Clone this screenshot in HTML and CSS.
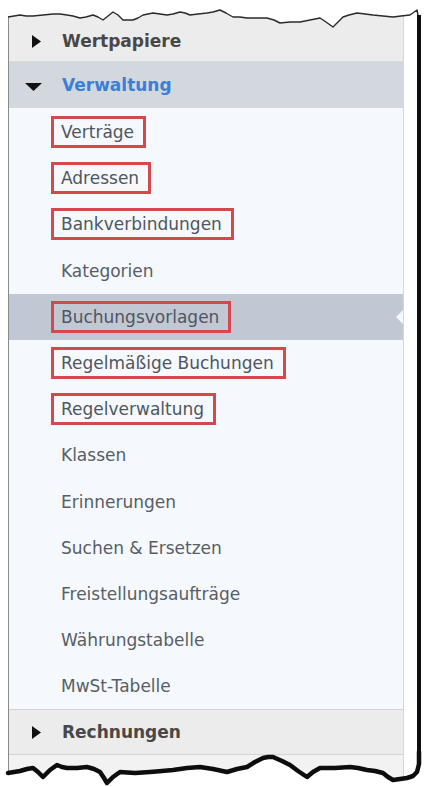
FILE: index.html
```html
<!DOCTYPE html>
<html lang="de">

<head>
    <meta charset="UTF-8">
    <meta name="viewport" content="width=device-width, initial-scale=1.0">
    <title>Navigation Verwaltung</title>
    <link rel="stylesheet" href="styles.css">
</head>

<body>
    <div class="sheet">
        <div class="panel">
            <div class="head first">
                <svg class="arrow" width="20" height="20" viewBox="0 0 20 20"><polygon points="8,4 17,10.5 8,17" fill="#111"/></svg>
                <span>Wertpapiere</span>
            </div>

            <div class="head open">
                <svg class="arrow" width="20" height="20" viewBox="0 0 20 20"><polygon points="1,8 18,8 9.5,16" fill="#111"/></svg>
                <span>Verwaltung</span>
            </div>

            <ul class="items">
                <li><span class="label marked">Verträge</span></li>
                <li><span class="label marked">Adressen</span></li>
                <li><span class="label marked">Bankverbindungen</span></li>
                <li><span class="label">Kategorien</span></li>
                <li class="active"><span class="label marked">Buchungsvorlagen</span></li>
                <li><span class="label marked">Regelmäßige Buchungen</span></li>
                <li><span class="label marked">Regelverwaltung</span></li>
                <li><span class="label">Klassen</span></li>
                <li><span class="label">Erinnerungen</span></li>
                <li><span class="label">Suchen &amp; Ersetzen</span></li>
                <li><span class="label">Freistellungsaufträge</span></li>
                <li><span class="label">Währungstabelle</span></li>
                <li><span class="label">MwSt-Tabelle</span></li>
            </ul>

            <div class="head last">
                <svg class="arrow" width="20" height="20" viewBox="0 0 20 20"><polygon points="8,4 17,10.5 8,17" fill="#111"/></svg>
                <span>Rechnungen</span>
            </div>
        </div>
        <div class="gap"></div>
        <div class="shadow"></div>

        <!-- abgerissene Kante oben -->
        <svg class="torn top" width="426" height="32" viewBox="0 0 426 32">
            <polygon fill="#ffffff" points="0,0 426,0 426,32 422,32 422,15 418,15 417,10 410,15 401,16 393,17 383,16 373,15 365,14 357,13 349,15 343,17 338,22 333,27 326,22 320,18 310,20 300,22 290,22 280,23 274,20 267,18 257,18 247,18 240,17 233,17 226,13 220,10 213,12 207,13 198,14 190,15 185,13 180,12 173,14 167,15 160,14 153,13 148,14 143,15 138,18 133,20 123,20 118,15 113,12 108,16 103,20 98,17 93,15 86,17 80,18 73,16 67,15 60,14 53,14 43,15 33,16 26,16 20,15 14,16 8,17 0,17"/>
            <polyline fill="none" stroke="#2a2a2a" stroke-width="1.4" stroke-linejoin="round" points="8,17 14,16 20,15 26,16 33,16 43,15 53,14 60,14 67,15 73,16 80,18 86,17 93,15 98,17 103,20 108,16 113,12 118,15 123,20 133,20 138,18 143,15 148,14 153,13 160,14 167,15 173,14 180,12 185,13 190,15 198,14 207,13 213,12 220,10 226,13 233,17 240,17 247,18 257,18 267,18 274,20 280,23 290,22 300,22 310,20 320,18 326,22 333,27 338,22 343,17 349,15 357,13 365,14 373,15 383,16 393,17 401,16 410,15 417,10 418,15"/>
        </svg>

        <!-- abgerissene Kante unten -->
        <svg class="torn bottom" width="426" height="37" viewBox="0 0 426 37">
            <polygon fill="#ffffff" points="0,23 8,23 14,22 20,21 27,19 33,18 38,22 43,27 50,20 57,15 62,17 67,18 77,18 87,17 94,19 100,22 104,28 107,33 113,27 120,22 135,23 150,22 162,21 173,20 187,18 200,17 213,19 227,22 237,19 247,17 255,12 263,8 268,7 273,7 282,11 290,15 298,21 307,27 313,22 320,18 335,18 350,17 358,18 367,20 375,21 383,23 388,27 393,30 400,29 407,28 413,26 417,22 419,17 421,12 426,12 426,37 0,37"/>
            <polyline fill="none" stroke="#0d0d0d" stroke-width="4.5" stroke-linejoin="round" stroke-linecap="round" points="8,23 14,22 20,21 27,19 33,18 38,22 43,27 50,20 57,15 62,17 67,18 77,18 87,17 94,19 100,22 104,28 107,33 113,27 120,22 135,23 150,22 162,21 173,20 187,18 200,17 213,19 227,22 237,19 247,17 255,12 263,8 268,7 273,7 282,11 290,15 298,21 307,27 313,22 320,18 335,18 350,17 358,18 367,20 375,21 383,23 388,27 393,30 400,29 407,28 413,26 417,22 419,14 419,2"/>
        </svg>
    </div>
</body>

</html>
```

FILE: styles.css
```css
/* Seitenleiste mit Menügruppen */
body {
    margin: 0;
    background-color: #ffffff;
    font-family: "DejaVu Sans", Verdana, sans-serif;
}

.sheet {
    position: relative;
    display: flex;
    width: 426px;
    height: 787px;
    padding: 10px 0 0 8px;
    box-sizing: border-box;
    overflow: hidden;
}

.panel {
    width: 396px;
    border-left: 1.5px solid #8a8a8a;
    border-right: 1px solid #d6d6d6;
    background-color: #f2f2f2;
    box-sizing: border-box;
}

.gap {
    width: 13px;
}

.shadow {
    width: 4px;
    background-color: #0d0d0d;
}

/* Gruppenköpfe */
.head {
    display: flex;
    align-items: center;
    height: 46px;
    padding-left: 15px;
    box-sizing: border-box;
    font-size: 17px;
    font-weight: bold;
    color: #484848;
    background-color: #ececec;
}

.head .arrow {
    flex: none;
    margin-right: 18px;
}

.head.first {
    height: 52px;
    padding-top: 10px;
    border-bottom: 1px solid #d9d9d9;
}

.head.open {
    background-color: #d3d8de;
    color: #3b7fd6;
}

.head.last {
    height: 46px;
    border-top: 1px solid #d4d4d4;
    border-bottom: 1px solid #d4d4d4;
}

/* Einträge */
.items {
    list-style: none;
    margin: 0;
    padding: 1px 0 0 0;
    background-color: #f5f8fc;
}

.items li {
    position: relative;
    display: flex;
    align-items: center;
    height: 46.2px;
    padding-left: 42px;
}

.items li.active {
    background-color: #c1c8d4;
}

.items li.active::after {
    content: '';
    position: absolute;
    right: 0;
    top: 16px;
    border-top: 7px solid transparent;
    border-bottom: 7px solid transparent;
    border-right: 7px solid #f5f8fc;
}

.label {
    display: inline-block;
    padding: 4px 8px;
    border: 2px solid transparent;
    font-size: 17px;
    line-height: 20px;
    color: #575e68;
}

.label.marked {
    border: 3px solid #d4494b;
    padding: 3px 9px 3px 7px;
    color: #4f5661;
}

/* abgerissene Kanten liegen über dem Panel */
.torn {
    position: absolute;
    left: 0;
}

.torn.top {
    top: 0;
}

.torn.bottom {
    top: 750px;
}
```
